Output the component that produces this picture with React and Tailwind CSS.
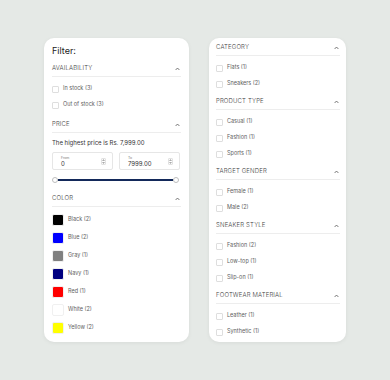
import React from "react";

const font = { fontFamily: "Inter, 'Noto Sans', sans-serif" };

function Chevron() {
  return (
    <svg width="5" height="4" viewBox="0 0 5 4" className="mt-[2px]">
      <polyline points="0.6,3 2.5,1 4.4,3" fill="none" stroke="#444" strokeWidth="0.7" />
    </svg>
  );
}

function Header({ title }) {
  return (
    <div className="h-[17px] flex items-center justify-between border-b border-[#ededed] pr-[1px]">
      <span className="text-[6px] font-[350] text-[#3a3a3a] tracking-[0.15px] leading-none">{title}</span>
      <Chevron />
    </div>
  );
}

function Check({ label }) {
  return (
    <div className="h-[16px] flex items-center gap-[4px]">
      <div className="w-[7px] h-[7px] border border-[#dedede] rounded-[1px] bg-white" />
      <span className="text-[5.5px] text-[#5e5e5e] leading-none">{label}</span>
    </div>
  );
}

function Section({ title, items, pb = "pb-[1px]" }) {
  return (
    <div className={pb}>
      <Header title={title} />
      <div className="pt-[4px]">
        {items.map((i) => (
          <Check key={i} label={i} />
        ))}
      </div>
    </div>
  );
}

function Spinner() {
  return (
    <div className="w-[5px] h-[7px] border border-[#e2e2e2] rounded-[1px] flex flex-col items-center justify-center gap-[1px]">
      <svg width="3" height="2" viewBox="0 0 3 2"><polygon points="0,2 1.5,0 3,2" fill="#aaa" /></svg>
      <svg width="3" height="2" viewBox="0 0 3 2"><polygon points="0,0 1.5,2 3,0" fill="#aaa" /></svg>
    </div>
  );
}

function PriceBox({ label, value }) {
  return (
    <div className="w-[61px] h-[18px] border border-[#e6e6e6] rounded-[2px] flex items-center justify-between pl-[8px] pr-[6px]">
      <div className="flex flex-col justify-center">
        <span className="text-[3.5px] text-[#777] leading-[4px]">{label}</span>
        <span className="text-[6px] text-[#333] leading-[7px]">{value}</span>
      </div>
      <Spinner />
    </div>
  );
}

const colors = [
  ["Black (2)", "#000000"],
  ["Blue (2)", "#0000ff"],
  ["Gray (1)", "#808080"],
  ["Navy (1)", "#000080"],
  ["Red (1)", "#ff0000"],
  ["White (2)", "#ffffff"],
  ["Yellow (2)", "#ffff00"],
];

export default function App() {
  return (
    <div style={font} className="w-[390px] h-[380px] bg-[#e5e9e6] flex items-start gap-[20px] pt-[38px] pl-[44px]">
      {/* Left card */}
      <div className="w-[145px] h-[304px] bg-white rounded-[10px] shadow-[0_1px_4px_rgba(0,0,0,0.06)] px-[8px] pt-[6px]">
        <div className="h-[14px] leading-[14px] text-[9px] text-[#222] mb-[2px]">Filter:</div>
        <Section title="AVAILABILITY" items={["In stock (3)", "Out of stock (3)"]} pb="pb-[3px]" />
        <div>
          <Header title="PRICE" />
          <div className="h-[16px] flex items-center text-[6px] text-[#333] pt-[3px]">
            The highest price is Rs. 7,999.00
          </div>
          <div className="flex gap-[6px] mt-[3px]">
            <PriceBox label="From" value="0" />
            <PriceBox label="To" value="7999.00" />
          </div>
          <div className="h-[9px] mt-[5px] flex items-center pr-[2px]">
            <div className="w-[6px] h-[6px] rounded-full border border-[#bdbdbd] bg-white shrink-0" />
            <div className="flex-1 h-[2px] bg-[#13295a]" />
            <div className="w-[6px] h-[6px] rounded-full border border-[#bdbdbd] bg-white shrink-0" />
          </div>
        </div>
        <div className="mt-[6px]">
          <Header title="COLOR" />
          <div className="pt-[4px]">
            {colors.map(([l, c]) => (
              <div key={l} className="h-[18px] flex items-center gap-[4px]">
                <div
                  className="w-[12px] h-[12px] rounded-[2px] border border-[#f0f0f0]"
                  style={{ backgroundColor: c }}
                />
                <span className="text-[5.5px] text-[#5e5e5e] leading-none">{l}</span>
              </div>
            ))}
          </div>
        </div>
      </div>

      {/* Right card */}
      <div className="w-[137px] h-[304px] bg-white rounded-[10px] shadow-[0_1px_4px_rgba(0,0,0,0.06)] pl-[7px] pr-[6px] pt-[1px]">
        <Section title="CATEGORY" items={["Flats (1)", "Sneakers (2)"]} />
        <Section title="PRODUCT TYPE" items={["Casual (1)", "Fashion (1)", "Sports (1)"]} />
        <Section title="TARGET GENDER" items={["Female (1)", "Male (2)"]} />
        <Section title="SNEAKER STYLE" items={["Fashion (2)", "Low-top (1)", "Slip-on (1)"]} />
        <Section title="FOOTWEAR MATERIAL" items={["Leather (1)", "Synthetic (1)"]} />
      </div>
    </div>
  );
}
